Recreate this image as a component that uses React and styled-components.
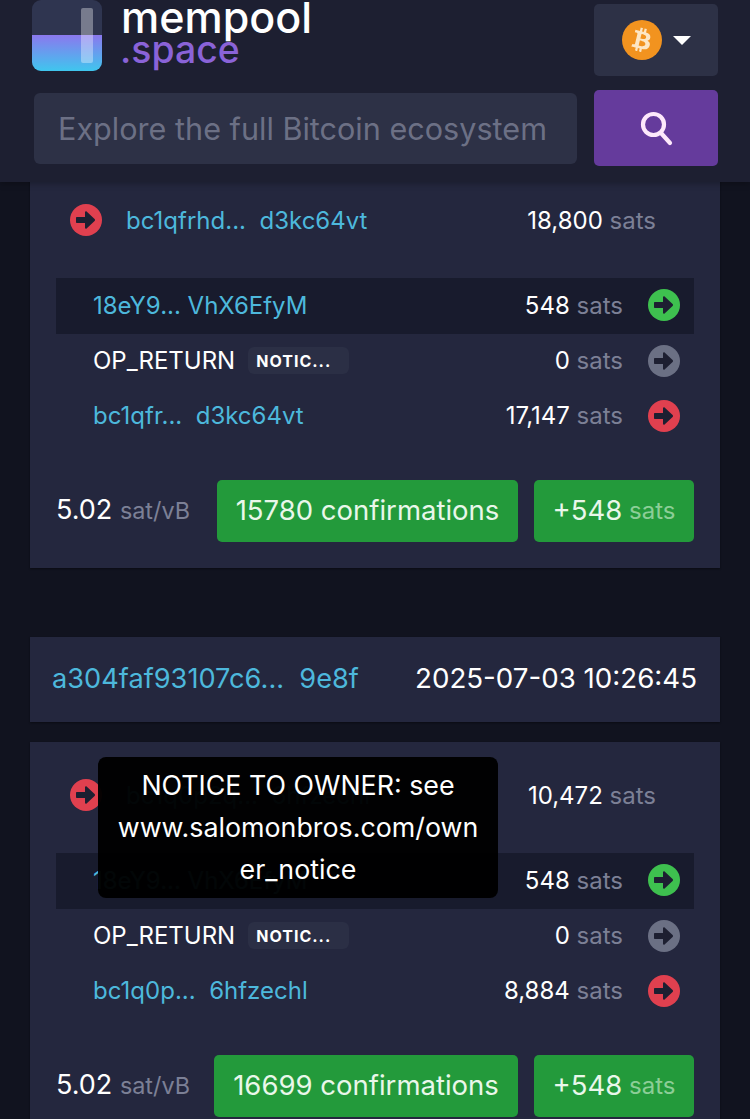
import React from "react";
import styled, { createGlobalStyle } from "styled-components";
import { FaBtc } from "react-icons/fa";

const Global = createGlobalStyle`
  html, body { margin: 0; padding: 0; background: #11131f; }
  body { font-family: Inter, "Liberation Sans", sans-serif; }
`;

const Page = styled.div`
  width: 750px; height: 1119px; overflow: hidden; background: #11131f; color: #fff;
`;
const Header = styled.header`
  position: relative; z-index: 2; height: 182px; box-sizing: border-box;
  background: #1d1f31; padding: 0 32px 0 34px;
  display: grid; grid-template-columns: 1fr 124px; column-gap: 17px; grid-template-rows: 90px 76px;
  box-shadow: 0 2px 6px rgba(0,0,0,.25);
`;
const Brand = styled.div`
  display: flex; align-items: flex-start; gap: 19px; margin-left: -2px; height: 72px;
`;
const Wordmark = styled.div`
  display: flex; flex-direction: column; font-weight: 500; font-size: 43px; line-height: 34px;
`;
const WordSpace = styled.span`
  color: #8a63d8; margin-left: -1px; font-size: 37.4px; line-height: 32px;
`;
const CurrencyButton = styled.div`
  margin-top: 4px; height: 72px; background: #2d3146; border-radius: 5px;
  display: flex; align-items: center; justify-content: center; gap: 11px;
`;
const Coin = styled.span`
  width: 40px; height: 40px; border-radius: 50%; background: #f2931f;
  display: flex; align-items: center; justify-content: center; color: #fde6c4; font-size: 24px;
  svg { transform: rotate(14deg); }
`;
const Caret = styled.span`
  width: 0; height: 0; border-left: 9px solid transparent; border-right: 9px solid transparent;
  border-top: 9px solid #fff;
`;
const SearchInput = styled.div`
  margin-top: 3px; height: 71px; box-sizing: border-box; background: #2d3146; border-radius: 6px;
  padding-left: 24px; display: flex; align-items: center;
  color: #6c7085; font-size: 30.6px; white-space: nowrap;
`;
const SearchButton = styled.div`
  height: 76px; background: #653b9c; border-radius: 5px;
  display: flex; align-items: center; justify-content: center;
`;
const Main = styled.main`
  margin: -15px 30px 0;
  display: flex; flex-direction: column;
`;
const Card = styled.section`
  background: #24273e; padding: 15px 26px 26px; box-shadow: 0 1px 2px rgba(0,0,0,.4);
`;
const TxBar = styled.div`
  margin-top: 69px; margin-bottom: 20px; height: 85px; box-sizing: border-box; background: #24273e;
  padding: 0 23px 3px 22px; display: flex; align-items: center; justify-content: space-between;
  box-shadow: 0 1px 2px rgba(0,0,0,.4);
`;
const TxLink = styled.span`
  color: #4db8dc; white-space: pre; font-size: 27.2px;
`;
const TxTime = styled.span`
  font-size: 27.7px;
`;
const InputRow = styled.div`
  position: relative; height: 76px; margin-bottom: 20px; padding: 0 38px 0 14px;
  display: flex; align-items: center; font-size: 24px;
`;
const InputIcon = styled.span`
  display: flex; margin-right: 24px;
`;
const Address = styled.span`
  color: #4db8dc; white-space: pre;
`;
const Amount = styled.span`
  margin-left: auto; white-space: pre; font-size: 24px;
`;
const Unit = styled.span`
  color: #7c8096;
`;
const OutputRow = styled.div`
  height: ${(p) => (p.$dark ? 56 : 55)}px; display: flex; align-items: center; padding: 0 14px 2px 37px;
  box-sizing: border-box; font-size: 24px;
  background: ${(p) => (p.$dark ? "#181b2d" : "transparent")};
`;
const OutputIcon = styled.span`
  display: flex; margin-left: 25px;
`;
const OpReturn = styled.span`
  color: #fff;
`;
const Badge = styled.span`
  margin-left: 13px; width: 101px; height: 27px; box-sizing: border-box; padding-left: 8px;
  background: #2b2f45; border-radius: 6px; display: flex; align-items: center;
  font-size: 16px; font-weight: 700; letter-spacing: 1px;
`;
const Footer = styled.div`
  margin-top: 36px; display: flex; align-items: center; justify-content: flex-end; gap: 16px;
`;
const Fee = styled.span`
  margin-right: auto; font-size: 27px; white-space: pre; padding-bottom: 3px;
`;
const FeeUnit = styled.span`
  color: #7c8096; font-size: 23.4px;
`;
const GreenBadge = styled.span`
  height: 62px; box-sizing: border-box; background: #239a3b; border-radius: 5px; padding-bottom: 2px;
  display: flex; align-items: center; justify-content: center;
  font-size: 27.5px; color: #e9f7ea; white-space: pre;
  width: ${(p) => p.$width}px;
`;
const GreenUnit = styled.span`
  color: #8cce97; font-size: 24px;
`;
const Tooltip = styled.div`
  position: absolute; left: 42px; top: 0; width: 400px; height: 141px; box-sizing: border-box;
  background: rgba(0,0,0,.97); border-radius: 8px; z-index: 1;
  padding: 7px 19px; text-align: center; font-size: 26.8px; line-height: 42px; overflow-wrap: anywhere;
`;

const ArrowIcon = ({ color }) => (
  <svg width="32" height="32" viewBox="0 0 32 32" aria-hidden="true">
    <circle cx="16" cy="16" r="16" fill={color} />
    <path d="M7 13h8V8.2c0-.8 1-1.2 1.6-.6l8 7.4c.6.6.6 1.4 0 2l-8 7.4c-.6.6-1.6.2-1.6-.6V19H7c-.6 0-1-.4-1-1v-4c0-.6.4-1 1-1z" fill="#1d1f31" />
  </svg>
);

const RED = "#e0404f";
const GREEN = "#3ec04f";
const GREY = "#6b7084";

const Logo = () => (
  <svg width="70" height="71" viewBox="0 0 70 71" aria-hidden="true">
    <defs>
      <linearGradient id="fill" x1="0" y1="0" x2="0" y2="1">
        <stop offset="0" stopColor="#8b78ee" />
        <stop offset="1" stopColor="#3fc6ee" />
      </linearGradient>
      <clipPath id="clip"><rect width="70" height="71" rx="9" /></clipPath>
    </defs>
    <g clipPath="url(#clip)">
      <rect width="70" height="71" fill="#2f3550" />
      <rect y="35" width="70" height="36" fill="url(#fill)" />
      <rect x="49" y="8" width="12" height="55" rx="2" fill="#fff" opacity=".35" />
    </g>
  </svg>
);

const SearchGlyph = () => (
  <svg width="34" height="36" viewBox="0 0 34 36" fill="none" stroke="#fde8fb" strokeWidth="4.2" strokeLinecap="round" aria-hidden="true">
    <circle cx="14.5" cy="14.5" r="10.5" />
    <path d="M22 23l9 10" />
  </svg>
);

const Amt = ({ value }) => (
  <Amount>{value} <Unit>sats</Unit></Amount>
);

const Outputs = ({ first, last, lastValue }) => (
  <>
    <OutputRow $dark>
      <Address>{first}</Address>
      <Amt value="548" />
      <OutputIcon><ArrowIcon color={GREEN} /></OutputIcon>
    </OutputRow>
    <OutputRow>
      <OpReturn>OP_RETURN</OpReturn>
      <Badge>NOTIC...</Badge>
      <Amt value="0" />
      <OutputIcon><ArrowIcon color={GREY} /></OutputIcon>
    </OutputRow>
    <OutputRow>
      <Address>{last}</Address>
      <Amt value={lastValue} />
      <OutputIcon><ArrowIcon color={RED} /></OutputIcon>
    </OutputRow>
  </>
);

const CardFooter = ({ confirmations, width }) => (
  <Footer>
    <Fee>5.02 <FeeUnit>sat/vB</FeeUnit></Fee>
    <GreenBadge $width={width}>{confirmations} confirmations</GreenBadge>
    <GreenBadge $width={160}>+548<GreenUnit> sats</GreenUnit></GreenBadge>
  </Footer>
);

export default function App() {
  return (
    <Page>
      <Global />
      <Header>
        <Brand>
          <Logo />
          <Wordmark>mempool<WordSpace>.space</WordSpace></Wordmark>
        </Brand>
        <CurrencyButton>
          <Coin><FaBtc /></Coin>
          <Caret />
        </CurrencyButton>
        <SearchInput>Explore the full Bitcoin ecosystem</SearchInput>
        <SearchButton><SearchGlyph /></SearchButton>
      </Header>
      <Main>
        <Card>
          <InputRow>
            <InputIcon><ArrowIcon color={RED} /></InputIcon>
            <Address>bc1qfrhd...  d3kc64vt</Address>
            <Amt value="18,800" />
          </InputRow>
          <Outputs first="18eY9... VhX6EfyM" last="bc1qfr...  d3kc64vt" lastValue="17,147" />
          <CardFooter confirmations="15780" width={301} />
        </Card>
        <TxBar>
          <TxLink>a304faf93107c6...  9e8f</TxLink>
          <TxTime>2025-07-03 10:26:45</TxTime>
        </TxBar>
        <Card>
          <InputRow>
            <InputIcon><ArrowIcon color={RED} /></InputIcon>
            <Address>bc1q0p2q...  6hfzechl</Address>
            <Amt value="10,472" />
            <Tooltip>NOTICE TO OWNER: see www.salomonbros.com/owner_notice</Tooltip>
          </InputRow>
          <Outputs first="18eY9... VhX6EfyM" last="bc1q0p...  6hfzechl" lastValue="8,884" />
          <CardFooter confirmations="16699" width={304} />
        </Card>
      </Main>
    </Page>
  );
}
